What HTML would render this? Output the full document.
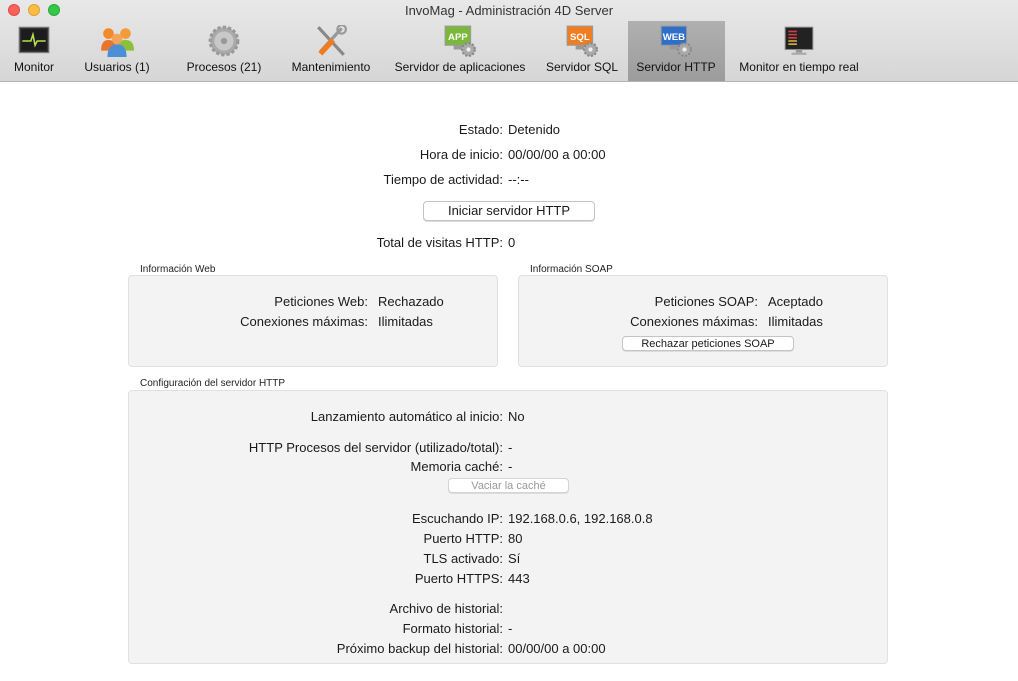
<!DOCTYPE html>
<html><head><meta charset="utf-8"><style>
*{margin:0;padding:0;box-sizing:border-box}
body{width:1018px;height:681px;background:#fff;font-family:"Liberation Sans",Helvetica,sans-serif;font-size:13px;color:#1a1a1a;position:relative;overflow:hidden}
.tb{position:absolute;left:0;top:0;width:1018px;height:82px;background:linear-gradient(#e8e8e8,#d6d6d6);border-bottom:1px solid #b4b4b4}
.title{position:absolute;top:3px;left:0;width:1018px;text-align:center;font-size:13px;color:#333}
.dot{position:absolute;top:4px;width:12px;height:12px;border-radius:50%}
.sel{position:absolute;left:628px;top:21px;width:97px;height:60px;background:linear-gradient(#b0b0b0,#9c9c9c)}
.it{position:absolute;top:60px;font-size:12px;color:#111;transform:translateX(-50%);white-space:nowrap}
.ic{position:absolute;top:25px;width:34px;height:32px;transform:translateX(-50%)}
.r{position:absolute;white-space:nowrap;line-height:16px;margin-top:1px}
.l{right:515px;text-align:right}
.box{position:absolute;background:#f3f3f3;border:1px solid #e0e0e0;border-radius:4px}
.g{position:absolute;font-size:10px;color:#222}
.btn{position:absolute;background:#fff;border:1px solid #c4c4c4;border-radius:4px;text-align:center;box-shadow:0 1px 0 #ddd}
</style></head><body>
<div class="tb">
<div class="dot" style="left:8px;background:#fc605b;border:1px solid #de4a45"></div>
<div class="dot" style="left:28px;background:#fdbc40;border:1px solid #dea032"></div>
<div class="dot" style="left:48px;background:#34c84a;border:1px solid #27a93a"></div>
<div class="title">InvoMag - Administración 4D Server</div>
<div class="sel"></div>
<svg class="ic" style="left:34px" viewBox="0 0 32 30"><rect x="2" y="2" width="28" height="24" fill="#333" stroke="#888"/><rect x="4" y="4" width="24" height="20" fill="#1c1c1c"/><path d="M5 15h8l2-6 2 10 2-4h8" stroke="#b7e04a" stroke-width="1.5" fill="none"/></svg>
<div class="it" style="left:34px">Monitor</div>
<svg class="ic" style="left:117px" viewBox="0 0 32 30"><circle cx="8" cy="8" r="5" fill="#f08a2a"/><circle cx="24" cy="8" r="5" fill="#f39a3a"/><path d="M1 24q0-10 7-10t8 10z" fill="#e9742a"/><path d="M16 24q0-10 8-10t8 10z" fill="#8cc03b"/><circle cx="16" cy="13" r="5" fill="#f3a35a"/><path d="M7 30q0-12 9-12t9 12z" fill="#4c8fd6"/></svg>
<div class="it" style="left:117px">Usuarios (1)</div>
<svg class="ic" style="left:224px" viewBox="0 0 32 30"><circle cx="16" cy="15" r="13" fill="#aaa" stroke="#999" stroke-width="3" stroke-dasharray="3 2"/><circle cx="16" cy="15" r="9" fill="#c8c8c8"/><circle cx="16" cy="15" r="3" fill="#999"/></svg>
<div class="it" style="left:224px">Procesos (21)</div>
<svg class="ic" style="left:331px" viewBox="0 0 32 30"><path d="M4 2l24 26" stroke="#888" stroke-width="3"/><path d="M26 3l-20 22" stroke="#999" stroke-width="3"/><path d="M18 14l-12 13" stroke="#f07c20" stroke-width="5"/><circle cx="26" cy="4" r="4" fill="none" stroke="#999" stroke-width="2"/></svg>
<div class="it" style="left:331px">Mantenimiento</div>
<svg class="ic" style="left:460px" viewBox="0 0 32 30"><rect x="2" y="1" width="24" height="18" fill="#7ab83c" stroke="#999"/><text x="14" y="14" font-size="9" font-weight="bold" fill="#fff" text-anchor="middle" font-family="Liberation Sans">APP</text><rect x="10" y="19" width="8" height="4" fill="#999"/><circle cx="24" cy="23" r="6" fill="#aaa" stroke="#888" stroke-width="2" stroke-dasharray="2 1.5"/><circle cx="24" cy="23" r="2" fill="#eee"/></svg>
<div class="it" style="left:460px">Servidor de aplicaciones</div>
<svg class="ic" style="left:582px" viewBox="0 0 32 30"><rect x="2" y="1" width="24" height="18" fill="#ef7d22" stroke="#999"/><text x="14" y="14" font-size="9" font-weight="bold" fill="#fff" text-anchor="middle" font-family="Liberation Sans">SQL</text><rect x="10" y="19" width="8" height="4" fill="#999"/><circle cx="24" cy="23" r="6" fill="#aaa" stroke="#888" stroke-width="2" stroke-dasharray="2 1.5"/><circle cx="24" cy="23" r="2" fill="#eee"/></svg>
<div class="it" style="left:582px">Servidor SQL</div>
<svg class="ic" style="left:676px" viewBox="0 0 32 30"><rect x="2" y="1" width="24" height="18" fill="#2f6fc8" stroke="#999"/><text x="14" y="14" font-size="9" font-weight="bold" fill="#fff" text-anchor="middle" font-family="Liberation Sans">WEB</text><rect x="10" y="19" width="8" height="4" fill="#999"/><circle cx="24" cy="23" r="6" fill="#aaa" stroke="#888" stroke-width="2" stroke-dasharray="2 1.5"/><circle cx="24" cy="23" r="2" fill="#eee"/></svg>
<div class="it" style="left:676px">Servidor HTTP</div>
<svg class="ic" style="left:799px" viewBox="0 0 32 30"><rect x="3" y="2" width="26" height="21" fill="#222" stroke="#888"/><path d="M6 6h8M6 9h8M6 12h8M6 15h8M6 18h8" stroke="#d04040" stroke-width="1.5"/><path d="M6 15h8M6 18h8" stroke="#c8b040" stroke-width="1.5"/><rect x="13" y="23" width="6" height="3" fill="#999"/><rect x="9" y="26" width="14" height="2" fill="#aaa"/></svg>
<div class="it" style="left:799px">Monitor en tiempo real</div>
</div>

<div class="r l" style="top:121px">Estado:</div><div class="r" style="left:508px;top:121px">Detenido</div>
<div class="r l" style="top:146px">Hora de inicio:</div><div class="r" style="left:508px;top:146px">00/00/00 a 00:00</div>
<div class="r l" style="top:171px">Tiempo de actividad:</div><div class="r" style="left:508px;top:171px">--:--</div>
<div class="btn" style="left:423px;top:201px;width:172px;height:20px;line-height:18px">Iniciar servidor HTTP</div>
<div class="r l" style="top:234px">Total de visitas HTTP:</div><div class="r" style="left:508px;top:234px">0</div>

<div class="g" style="left:140px;top:264px">Información Web</div>
<div class="box" style="left:128px;top:275px;width:370px;height:92px"></div>
<div class="r" style="right:650px;top:293px">Peticiones Web:</div><div class="r" style="left:378px;top:293px">Rechazado</div>
<div class="r" style="right:650px;top:313px">Conexiones máximas:</div><div class="r" style="left:378px;top:313px">Ilimitadas</div>

<div class="g" style="left:530px;top:264px">Información SOAP</div>
<div class="box" style="left:518px;top:275px;width:370px;height:92px"></div>
<div class="r" style="right:260px;top:293px">Peticiones SOAP:</div><div class="r" style="left:768px;top:293px">Aceptado</div>
<div class="r" style="right:260px;top:313px">Conexiones máximas:</div><div class="r" style="left:768px;top:313px">Ilimitadas</div>
<div class="btn" style="left:622px;top:336px;width:172px;height:15px;line-height:14px;font-size:11px">Rechazar peticiones SOAP</div>

<div class="g" style="left:140px;top:378px">Configuración del servidor HTTP</div>
<div class="box" style="left:128px;top:390px;width:760px;height:274px"></div>
<div class="r l" style="top:408px">Lanzamiento automático al inicio:</div><div class="r" style="left:508px;top:408px">No</div>
<div class="r l" style="top:439px">HTTP Procesos del servidor (utilizado/total):</div><div class="r" style="left:508px;top:439px">-</div>
<div class="r l" style="top:458px">Memoria caché:</div><div class="r" style="left:508px;top:458px">-</div>
<div class="btn" style="left:448px;top:478px;width:121px;height:15px;line-height:14px;font-size:11px;color:#999;border-color:#d4d4d4">Vaciar la caché</div>
<div class="r l" style="top:510px">Escuchando IP:</div><div class="r" style="left:508px;top:510px">192.168.0.6, 192.168.0.8</div>
<div class="r l" style="top:530px">Puerto HTTP:</div><div class="r" style="left:508px;top:530px">80</div>
<div class="r l" style="top:550px">TLS activado:</div><div class="r" style="left:508px;top:550px">Sí</div>
<div class="r l" style="top:570px">Puerto HTTPS:</div><div class="r" style="left:508px;top:570px">443</div>
<div class="r l" style="top:600px">Archivo de historial:</div>
<div class="r l" style="top:620px">Formato historial:</div><div class="r" style="left:508px;top:620px">-</div>
<div class="r l" style="top:640px">Próximo backup del historial:</div><div class="r" style="left:508px;top:640px">00/00/00 a 00:00</div>
</body></html>
